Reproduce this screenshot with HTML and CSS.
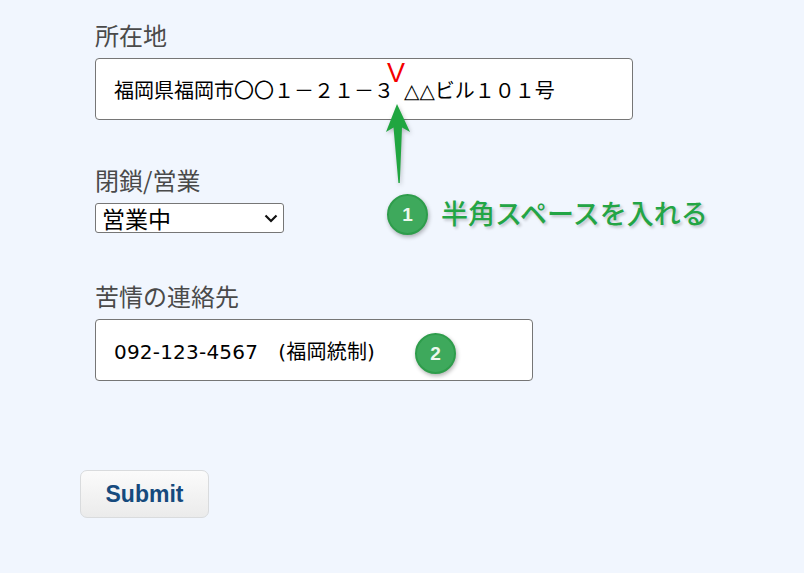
FILE: index.html
```html
<!DOCTYPE html>
<html lang="ja">
<head>
<meta charset="utf-8">
<title>Form</title>
<link rel="stylesheet" href="styles.css">
</head>
<body>
<div class="page">
  <form class="form">
    <div class="field field-address">
      <label class="label" for="addr">所在地</label>
      <input class="text text-wide" id="addr" type="text" value="福岡県福岡市〇〇１－２１－３&ensp;△△ビル１０１号">
    </div>
    <div class="field field-status">
      <label class="label" for="status">閉鎖/営業</label>
      <div class="select-wrap">
        <select class="select" id="status"><option>営業中</option><option>閉鎖</option></select>
        <svg class="chevron" width="14" height="9" viewBox="0 0 14 9"><path d="M1.5 1.5 L7 7 L12.5 1.5" fill="none" stroke="#111" stroke-width="2.2"/></svg>
      </div>
    </div>
    <div class="field field-contact">
      <label class="label" for="tel">苦情の連絡先</label>
      <input class="text text-mid" id="tel" type="text" value="092-123-4567　(福岡統制)">
    </div>
    <button class="submit" type="button">Submit</button>
  </form>

  <span class="caret-mark">V</span>
  <svg class="arrow" width="40" height="90" viewBox="0 0 40 90">
    <polygon points="17,4 30,32 22,27.5 19.8,83 18.4,83 13.5,27.5 6,32" fill="#20a640"/>
  </svg>
  <span class="badge badge-1">1</span>
  <span class="note">半角スペースを入れる</span>
  <span class="badge badge-2">2</span>
</div>
</body>
</html>
```
FILE: styles.css
```css
html, body {
  margin: 0;
  padding: 0;
  background: #f1f6fe;
}

.page {
  position: relative;
  width: 804px;
  height: 573px;
  overflow: hidden;
}

.form {
  display: flex;
  flex-direction: column;
  align-items: flex-start;
  padding: 20px 0 0 80px;
}

.field {
  display: flex;
  flex-direction: column;
  align-items: flex-start;
  margin-left: 15px;
}

.field-address { margin-bottom: 45px; }
.field-status { margin-bottom: 48px; }
.field-contact { margin-bottom: 89px; }

.label {
  font-family: "Noto Sans CJK JP", sans-serif;
  font-size: 24px;
  line-height: 30px;
  color: #4a4a4a;
  margin-bottom: 8px;
}

.text {
  box-sizing: border-box;
  height: 62px;
  padding: 0 18px;
  border: 1px solid #767676;
  border-radius: 4px;
  background: #fff;
  font-family: "DejaVu Sans", "Noto Sans CJK JP", sans-serif;
  font-size: 20px;
  color: #000;
  outline: none;
}

.text-wide { width: 538px; }
.text-mid {
  width: 438px;
  letter-spacing: 0.2px;
}

.select-wrap {
  position: relative;
  width: 189px;
  height: 30px;
}

.select {
  appearance: none;
  -webkit-appearance: none;
  box-sizing: border-box;
  width: 189px;
  height: 30px;
  margin: 0;
  padding: 0 0 0 6px;
  border: 1px solid #767676;
  border-radius: 3px;
  background: #fff;
  font-family: "Noto Sans CJK JP", sans-serif;
  font-size: 23px;
  line-height: 28px;
  color: #000;
}

.chevron {
  position: absolute;
  right: 6px;
  top: 11px;
  pointer-events: none;
}

.submit {
  box-sizing: border-box;
  width: 129px;
  height: 48px;
  border: 1px solid #d9dbdd;
  border-radius: 7px;
  background: linear-gradient(#fbfbfb, #ebebeb);
  font-family: "Liberation Sans", Arial, sans-serif;
  font-weight: bold;
  font-size: 23px;
  color: #164a7d;
  padding: 0;
}

.caret-mark {
  position: absolute;
  left: 387px;
  top: 58px;
  font-family: "Liberation Sans", Arial, sans-serif;
  font-size: 27px;
  line-height: 30px;
  color: #f40000;
}

.arrow {
  position: absolute;
  left: 380px;
  top: 100px;
  filter: drop-shadow(1px 2px 2px rgba(0, 0, 0, 0.25));
}

.badge {
  position: absolute;
  box-sizing: border-box;
  width: 41px;
  height: 41px;
  border-radius: 50%;
  background: #3ea95c;
  border: 2px solid #2e9d4b;
  box-shadow: 1px 2px 4px rgba(0, 0, 0, 0.3);
  color: #eef8ef;
  font-family: "Liberation Sans", Arial, sans-serif;
  font-weight: bold;
  font-size: 19px;
  line-height: 37px;
  text-align: center;
}

.badge-1 { left: 387px; top: 194px; }
.badge-2 { left: 415px; top: 333px; }

.note {
  position: absolute;
  left: 441px;
  top: 195px;
  font-family: "Noto Sans CJK JP", sans-serif;
  font-weight: 500;
  font-size: 27px;
  line-height: 36px;
  color: #23a545;
  text-shadow: 2px 2px 3px rgba(0, 0, 0, 0.22);
}
```
